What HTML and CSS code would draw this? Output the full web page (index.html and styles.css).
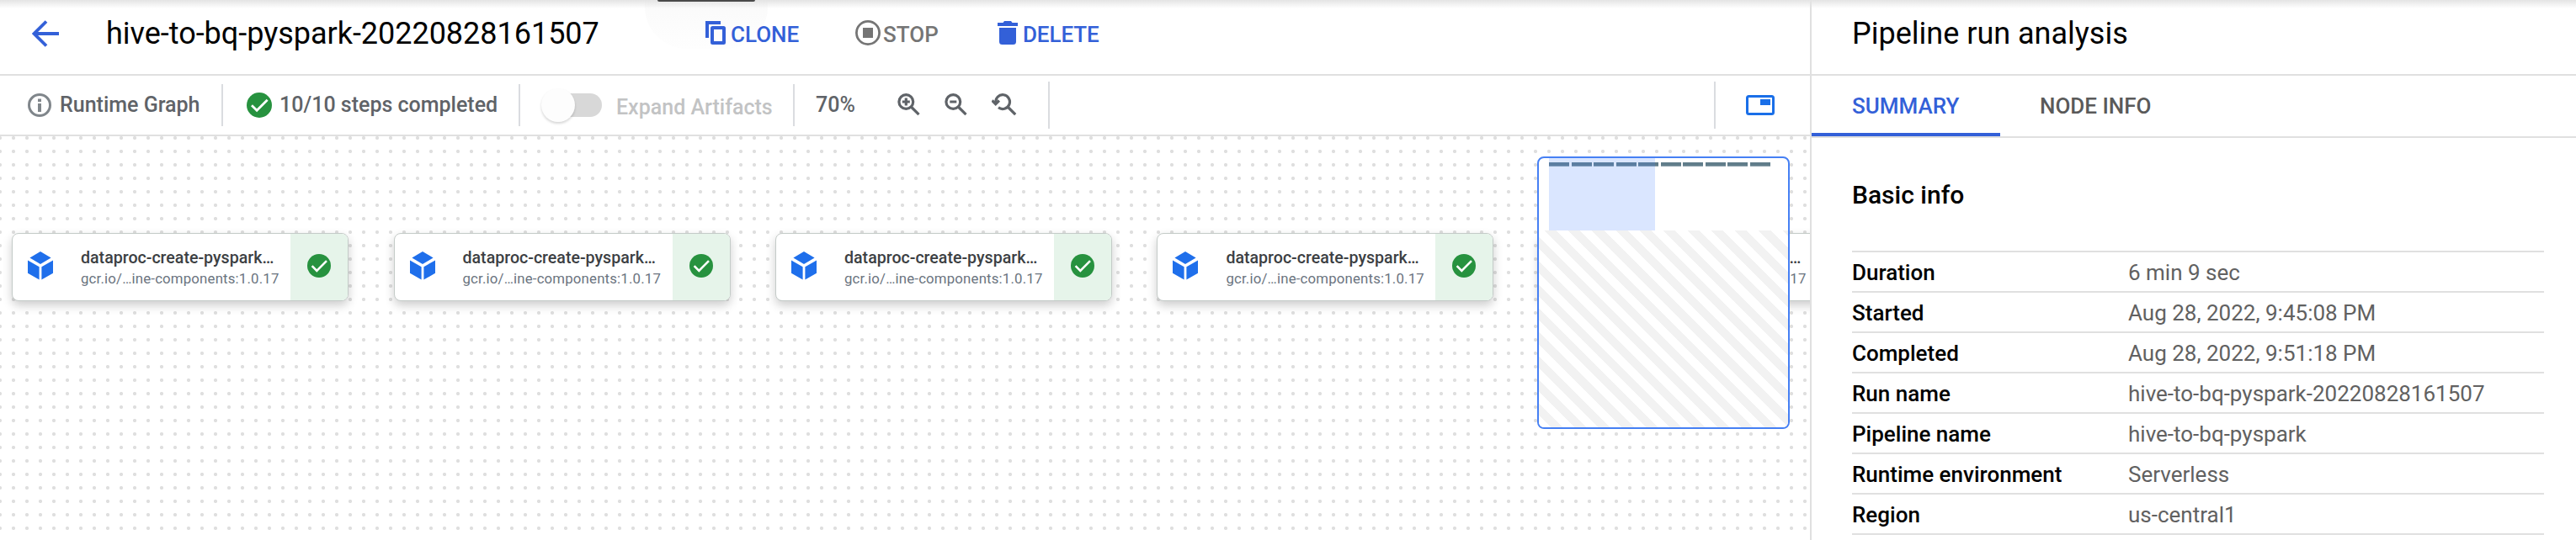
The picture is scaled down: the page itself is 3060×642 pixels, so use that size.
FILE: index.html
```html
<!DOCTYPE html>
<html lang="en">
<head>
<meta charset="utf-8">
<title>Pipeline run</title>
<link rel="stylesheet" href="styles.css">
</head>
<body>
<svg class="defs" aria-hidden="true">
  <symbol id="cube" viewBox="0 0 30 34"><path d="M15 0l12.600 7.500L15 15 2.400 7.500zM0 10.400l13.600 7.800V33.500L0 25.800zM30 10.400l-13.600 7.800V33.500L30 25.800z"/></symbol>
  <symbol id="check" viewBox="0 0 28 28"><circle cx="14" cy="14" r="14" fill="#27923f"/><path d="M5.600 14.200l5.700 5.700L23 8.200" fill="none" stroke="#fff" stroke-width="2.600"/></symbol>
</svg>
<div class="app">
  <main class="main">
    <header class="header">
      <svg class="back" viewBox="0 0 32 32"><path d="M17 1.500L2.500 16 17 30.500M2.500 16H32" fill="none" stroke="#3360d8" stroke-width="3.800"/></svg>
      <h1 class="title">hive-to-bq-pyspark-20220828161507</h1>
      <div class="actions">
        <button class="action clone"><svg width="24" height="28" viewBox="0 0 24 28"><path d="M2 20V2H18" fill="none" stroke="currentColor" stroke-width="4"/><rect x="8" y="8" width="14" height="18" rx=".5" fill="none" stroke="currentColor" stroke-width="4" stroke-linejoin="round"/></svg>CLONE</button>
        <button class="action stop"><svg width="30" height="30" viewBox="0 0 30 30"><circle cx="15" cy="15" r="13.600" fill="none" stroke="currentColor" stroke-width="2.800"/><path d="M9 9h12v12H9z" fill="currentColor"/></svg>STOP</button>
        <button class="action delete"><svg width="24" height="28" viewBox="0 0 24 28"><path d="M0 2h6.500L8 0h8l1.500 2H24v4H0zM2 8h20v16.500q0 3.500-3.500 3.500h-13Q2 28 2 24.500z" fill="currentColor"/></svg>DELETE</button>
      </div>
      <div class="tip-glow"></div>
      <div class="tip"></div>
    </header>
    <div class="toolbar">
      <div class="cell graph"><svg width="28" height="28" viewBox="0 0 28 28"><circle cx="14" cy="14" r="12.500" fill="none" stroke="#80868b" stroke-width="3"/><path d="M12 6.500h4v3.500h-4zM12 12h4v10h-4z" fill="#80868b"/></svg><span>Runtime Graph</span></div>
      <div class="cell steps"><svg width="30" height="30"><use href="#check"/></svg><span>10/10 steps completed</span></div>
      <div class="cell expand"><span class="toggle"></span><span class="expand-label">Expand Artifacts</span></div>
      <div class="cell zoom">
        <span class="percent">70%</span>
        <svg class="tool" viewBox="0 0 28 28"><g fill="none" stroke="currentColor" stroke-width="3.200"><circle cx="10.300" cy="10" r="8.400"/><path d="M15.800 15.500l9.700 9.700M10.300 5.500v9M5.800 10h9"/></g></svg>
        <svg class="tool" viewBox="0 0 28 28"><g fill="none" stroke="currentColor" stroke-width="3.200"><circle cx="10.300" cy="10" r="8.400"/><path d="M15.800 15.500l9.700 9.700M6.300 10h8"/></g></svg>
        <svg class="tool reset" viewBox="0 0 30 28"><g fill="none" stroke="currentColor" stroke-width="3.200"><path d="M4.700 11A8.400 8.400 0 1 1 8 16.800M18.500 15.500l9.700 9.700"/><path d="M.5 8.500l4.200 4.200 4.200-4.200"/></g></svg>
      </div>
      <div class="mapbtn"><svg width="34" height="24" viewBox="0 0 34 24"><rect x="1.500" y="1.500" width="31" height="21" rx="2" fill="none" stroke="#1a6fe8" stroke-width="3"/><path d="M17 5h12v7H17z" fill="#1a6fe8"/></svg></div>
    </div>
    <section class="canvas">
      <div class="node n1"><svg class="cube"><use href="#cube"/></svg><div class="text"><b>dataproc-create-pyspark…</b><span>gcr.io/…ine-components:1.0.17</span></div><div class="state"><svg><use href="#check"/></svg></div></div>
      <div class="node n2"><svg class="cube"><use href="#cube"/></svg><div class="text"><b>dataproc-create-pyspark…</b><span>gcr.io/…ine-components:1.0.17</span></div><div class="state"><svg><use href="#check"/></svg></div></div>
      <div class="node n3"><svg class="cube"><use href="#cube"/></svg><div class="text"><b>dataproc-create-pyspark…</b><span>gcr.io/…ine-components:1.0.17</span></div><div class="state"><svg><use href="#check"/></svg></div></div>
      <div class="node n4"><svg class="cube"><use href="#cube"/></svg><div class="text"><b>dataproc-create-pyspark…</b><span>gcr.io/…ine-components:1.0.17</span></div><div class="state"><svg><use href="#check"/></svg></div></div>
      <div class="node n5"><svg class="cube"><use href="#cube"/></svg><div class="text"><b>dataproc-create-pyspark…</b><span>gcr.io/…ine-components:1.0.17</span></div><div class="state"><svg><use href="#check"/></svg></div></div>
      <div class="minimap">
        <div class="map-area">
          <div class="bars"><i></i><i></i><i></i><i></i><i></i><i></i><i></i><i></i><i></i><i></i></div>
          <div class="viewport"></div>
        </div>
        <div class="hatch"></div>
      </div>
    </section>
  </main>
  <aside class="panel">
    <h2 class="panel-title">Pipeline run analysis</h2>
    <nav class="tabs"><a class="tab active">SUMMARY</a><a class="tab">NODE INFO</a></nav>
    <div class="details">
      <h3>Basic info</h3>
      <dl>
        <div><dt>Duration</dt><dd>6 min 9 sec</dd></div>
        <div><dt>Started</dt><dd>Aug 28, 2022, 9:45:08 PM</dd></div>
        <div><dt>Completed</dt><dd>Aug 28, 2022, 9:51:18 PM</dd></div>
        <div><dt>Run name</dt><dd>hive-to-bq-pyspark-20220828161507</dd></div>
        <div><dt>Pipeline name</dt><dd>hive-to-bq-pyspark</dd></div>
        <div><dt>Runtime environment</dt><dd>Serverless</dd></div>
        <div><dt>Region</dt><dd>us-central1</dd></div>
      </dl>
    </div>
  </aside>
  <div class="shade"></div>
</div>
</body>
</html>
```
FILE: styles.css
```css
* { box-sizing: border-box; margin: 0; }
body { font-family: Roboto, sans-serif; background: #fff; color: #000; overflow: hidden; }
svg { display: block; flex: none; }
.defs { position: absolute; width: 0; height: 0; }
.app { position: relative; display: flex; width: 3060px; height: 642px; overflow: hidden; }
.shade { position: absolute; inset: 0 0 auto; height: 10px; background: linear-gradient(#e4e4e4, rgba(255,255,255,0)); }
.main { width: 2150px; display: flex; flex-direction: column; }

.header { position: relative; height: 90px; border-bottom: 2px solid #e0e0e0; display: flex; align-items: center; padding: 0 0 8px 38px; }
.back { width: 32px; height: 32px; }
.title { margin-left: 56px; width: 712px; font-size: 36px; font-weight: 400; letter-spacing: -.02px; white-space: nowrap; }
.actions { display: flex; align-items: center; margin-top: 2px; position: relative; z-index: 1; }
.action { display: flex; align-items: center; gap: 6px; height: 40px; padding: 0; border: 0; background: none; font: 500 26px Roboto, sans-serif; color: #3360d8; }
.action svg { margin-bottom: 4px; }
.clone { width: 178px; }
.stop { width: 169px; color: #757575; gap: 3px; }
.delete { gap: 6px; letter-spacing: -.1px; }
.tip { position: absolute; left: 781px; top: 0; width: 116px; height: 2px; background: #4a4a4a; border-radius: 0 0 2px 2px; z-index: 2; }
.tip-glow { position: absolute; left: 766px; top: 0; width: 146px; height: 58px; border-radius: 0 0 50px 50px; background: linear-gradient(#fafafa, #fefefe); }

.toolbar { height: 72px; border-bottom: 2px solid #e0e0e0; display: flex; align-items: center; font-size: 25px; font-weight: 500; color: #5f6368; }
.cell { display: flex; align-items: center; height: 50px; border-right: 2px solid #dadce0; white-space: nowrap; }
.cell > span:not([class]), .percent { margin-top: -2px; }
.graph { width: 265px; padding-left: 33px; gap: 10px; }
.steps { width: 353px; padding-left: 28px; gap: 9px; }
.expand { width: 326px; padding-left: 25px; }
.toggle { position: relative; width: 72px; height: 28px; display: block; }
.toggle::before { content: ""; position: absolute; left: 8px; top: 0; width: 64px; height: 28px; border-radius: 14px; background: #d8d8d8; }
.toggle::after { content: ""; position: absolute; left: 0; top: -6px; width: 40px; height: 40px; border-radius: 50%; background: #fdfdfd; box-shadow: 0 2px 3px rgba(0,0,0,.16); }
.expand-label { margin-left: 17px; margin-top: 5px; color: #c2c3c4; }
.zoom { width: 303px; height: 56px; padding-left: 25px; }
.percent { width: 97px; font-size: 25px; }
.tool { width: 28px; height: 28px; margin-right: 28px; }
.reset { width: 30px; }
.mapbtn { margin-left: auto; width: 114px; height: 56px; padding-left: 36px; border-left: 2px solid #dadce0; display: flex; align-items: center; }

.canvas { position: relative; flex: 1; overflow: hidden; background: radial-gradient(circle at 8px 8px, #dfdfdf 1.800px, transparent 2.400px) -8px -6px / 16px 16px; }
.node { position: absolute; top: 115px; width: 400px; height: 81px; display: flex; align-items: center; border: 1px solid #c4cbc8; border-radius: 8px; background: #fff; box-shadow: 0 5px 12px rgba(0,0,0,.2); overflow: hidden; }
.n1 { left: 14px; }
.n2 { left: 467.500px; }
.n3 { left: 921px; }
.n4 { left: 1374.400px; }
.n5 { left: 1828px; }
.cube { width: 30px; height: 34px; margin-left: 18px; margin-top: -3px; fill: #1f6feb; }
.text { width: 248px; margin-left: 33px; padding-top: 3px; display: flex; flex-direction: column; white-space: nowrap; }
.text b { font-size: 19.600px; line-height: 25px; font-weight: 500; color: #3c4043; }
.text span { font-size: 16.800px; line-height: 25px; letter-spacing: .18px; color: #6b7480; }
.state { margin-left: auto; width: 68px; height: 100%; background: #e6f4ea; display: flex; align-items: center; padding-left: 20px; }
.state svg { width: 28px; height: 28px; margin-top: -3px; }

.minimap { position: absolute; left: 1826px; top: 24px; width: 300px; height: 324px; border: 2px solid #4680f4; border-radius: 8px; background: #fff; overflow: hidden; }
.map-area { position: relative; height: 86px; padding: 5px 0 0 12px; }
.bars { display: flex; gap: 2.500px; }
.bars i { width: 24px; height: 5px; background: #617d8a; border: 0 solid #90a4ae; border-bottom-width: 1px; }
.viewport { position: absolute; left: 12px; top: 0; width: 126px; height: 86px; background: rgba(72,128,255,.2); }
.hatch { height: 234px; background: repeating-linear-gradient(45deg, #fff 0 10px, #f2f2f2 10px 20px); }

.panel { flex: 1; border-left: 2px solid #e0e0e0; }
.panel-title { height: 90px; border-bottom: 2px solid #e0e0e0; padding-left: 48px; font-size: 36px; line-height: 80px; font-weight: 400; }
.tabs { height: 74px; border-bottom: 2px solid #e0e0e0; display: flex; }
.tab { height: 72px; padding: 0 47px; font-size: 26px; line-height: 72px; font-weight: 500; color: #5a5a5a; }
.active { width: 224px; padding-left: 48px; color: #3360d8; border-bottom: 4px solid #3360d8; }
.details { padding: 0 38px 0 48px; }
h3 { height: 134px; font-size: 30px; line-height: 136px; font-weight: 500; }
dl { border-top: 2px solid #e0e0e0; }
dl div { display: flex; height: 48px; border-bottom: 2px solid #e0e0e0; font-size: 26px; line-height: 48px; }
dt { width: 328px; font-weight: 500; }
dd { color: #616161; }
```
